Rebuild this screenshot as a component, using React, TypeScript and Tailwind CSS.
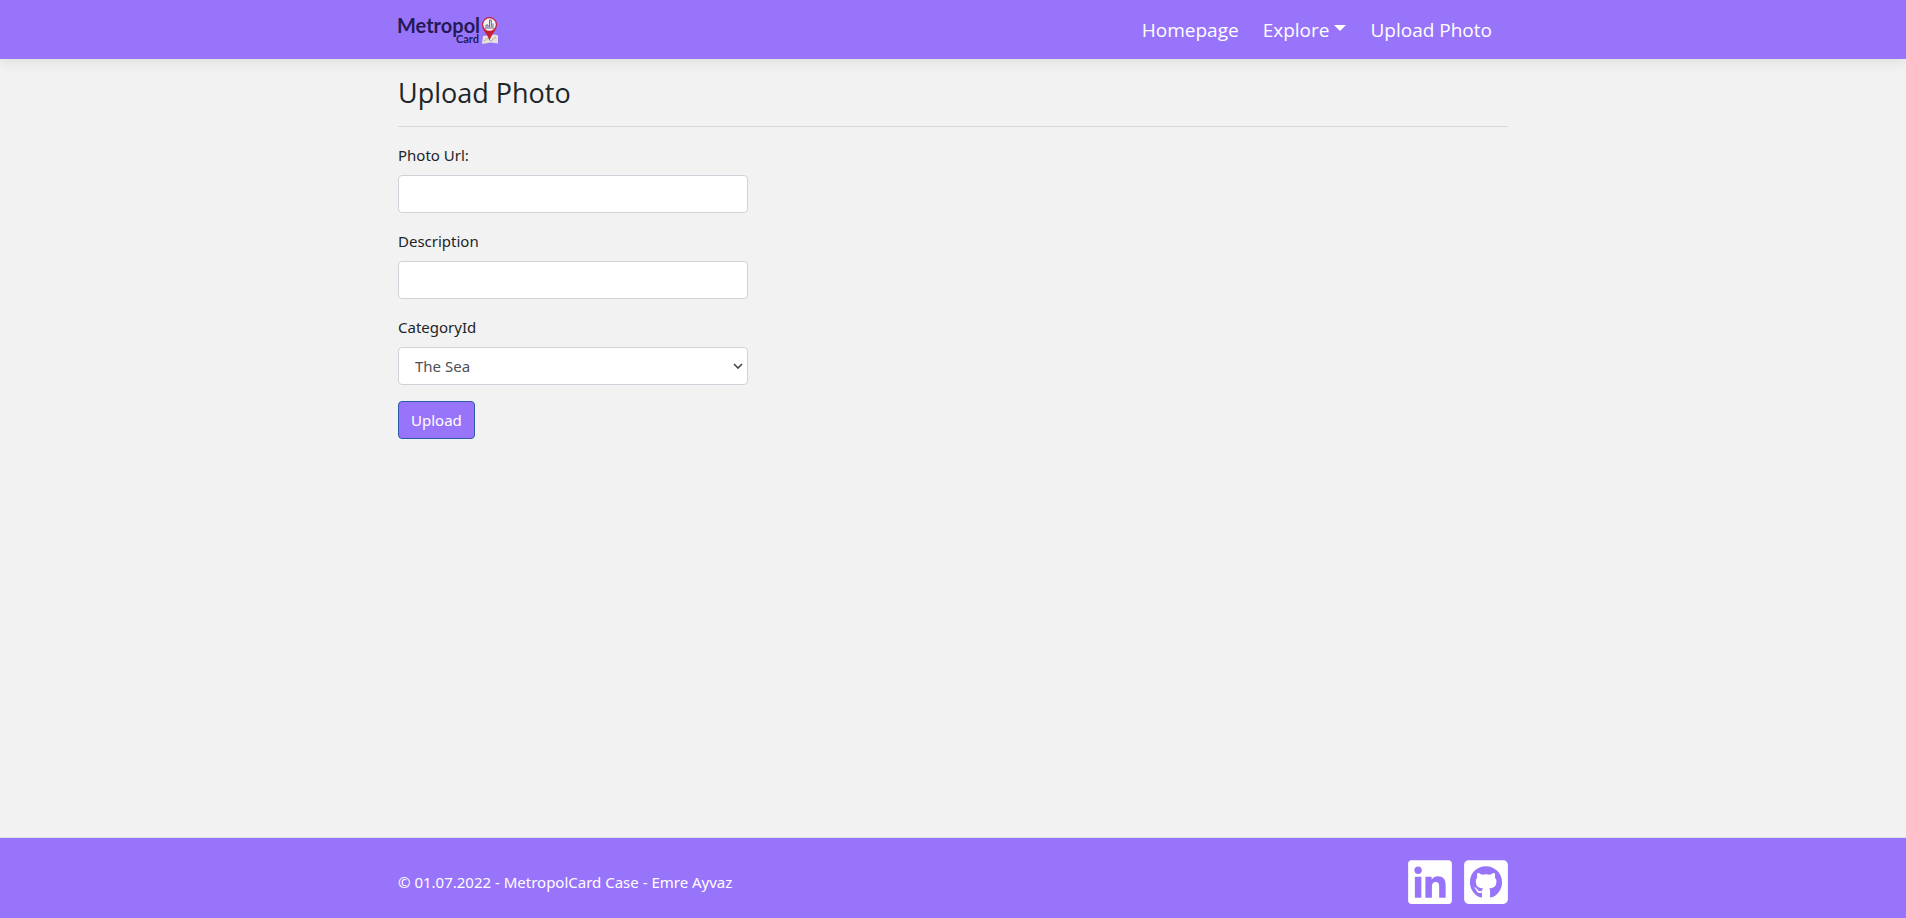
import { FaLinkedin, FaGithubSquare } from "react-icons/fa";

function Logo() {
  return (
    <svg viewBox="0 0 100 36" className="h-9 w-[100px]" role="img" aria-label="Metropol Card">
      <g fill="#241a55" fontWeight="700" fontFamily='Lato, "Open Sans", sans-serif'>
        <text x="-1" y="21" fontSize="20">Metropol</text>
        <text x="81" y="31" fontSize="11" textAnchor="end">Card</text>
      </g>
      <path d="M85 24l12-1.500 3 1v8l-7-1-9 1.500z" fill="#e4e2dc" />
      <path d="M86 29l4-3 3 3 5-4" stroke="#b5ae9c" strokeWidth="1" fill="none" />
      <path d="M91.500 28.500C89.500 22 84 18 84 12.500a7.500 7.500 0 0 1 15 0c0 5.500-5.500 9.500-7.500 16z" fill="#c5202f" />
      <circle cx="91.500" cy="12.500" r="6.300" fill="#f4f2f7" />
      <path d="M88 15.500V13h2v2.500M91.500 15V8h1.800v7M95 15V11.500M87 16h9" stroke="#5b5678" strokeWidth="0.9" fill="none" />
    </svg>
  );
}

const field =
  "block h-[38px] w-full rounded border border-[#ced4da] bg-white px-3 text-[#495057] focus:border-[#80bdff] focus:outline-none";
const container = "mx-auto w-full max-w-[1140px] px-[15px]";

export default function App() {
  return (
    <div className='flex min-h-screen flex-col bg-[#f2f2f2] font-["Noto_Sans","Open_Sans",sans-serif] text-[15px] leading-6 text-[#212529]'>
      <header className="bg-[#9874fb] shadow-[0_4px_12px_rgba(0,0,0,0.08)]">
        <nav className={`${container} flex h-[59px] items-center justify-between`}>
          <a href="#home">
            <Logo />
          </a>
          <ul className='flex gap-2 font-["Open_Sans",sans-serif] text-[19px] leading-[30px] text-white'>
            <li>
              <a href="#home" className="px-2">Homepage</a>
            </li>
            <li>
              <button type="button" className="flex px-2">
                Explore
                <svg viewBox="0 0 12 6" className="mt-[10px] ml-[5px] h-[6px] w-3" fill="currentColor" aria-hidden="true">
                  <path d="M0 0h12L6 6z" />
                </svg>
              </button>
            </li>
            <li>
              <a href="#upload" className="pr-4 pl-2">Upload Photo</a>
            </li>
          </ul>
        </nav>
      </header>

      <main className={`${container} flex-1 pt-[17px]`}>
        <h1 className='font-["Open_Sans",sans-serif] text-[27px] leading-[34px]'>Upload Photo</h1>
        <hr className="my-4 border-t border-[#d7d7d7]" />
        <form className="flex w-full max-w-[350px] flex-col gap-4" onSubmit={(e) => e.preventDefault()}>
          <div>
            <label htmlFor="photo-url" className="mb-2 block">Photo Url:</label>
            <input id="photo-url" type="text" className={field} />
          </div>
          <div>
            <label htmlFor="description" className="mb-2 block">Description</label>
            <input id="description" type="text" className={field} />
          </div>
          <div>
            <label htmlFor="category" className="mb-2 block">CategoryId</label>
            <div className="relative">
              <select id="category" className={`${field} appearance-none pl-4`} defaultValue="The Sea">
                <option>The Sea</option>
              </select>
              <svg viewBox="0 0 10 6" className="pointer-events-none absolute top-4 right-[5px] h-[6px] w-[10px]" fill="none" stroke="#444" strokeWidth="1.600" aria-hidden="true">
                <path d="M1 1l4 4 4-4" />
              </svg>
            </div>
          </div>
          <button type="submit" className="h-[38px] self-start rounded border border-[#2f5aa8] bg-[#9874fb] px-3 text-white">
            Upload
          </button>
        </form>
      </main>

      <footer className="border-t border-[#dee2e6] bg-[#9874fb] text-white">
        <div className={`${container} flex h-20 items-center justify-between pt-2`}>
          <p>© 01.07.2022 - MetropolCard Case - Emre Ayvaz</p>
          <div className="flex gap-3">
            <a href="#linkedin" aria-label="LinkedIn">
              <FaLinkedin className="h-[50px] w-11" />
            </a>
            <a href="#github" aria-label="GitHub">
              <FaGithubSquare className="h-[50px] w-11" />
            </a>
          </div>
        </div>
      </footer>
    </div>
  );
}
